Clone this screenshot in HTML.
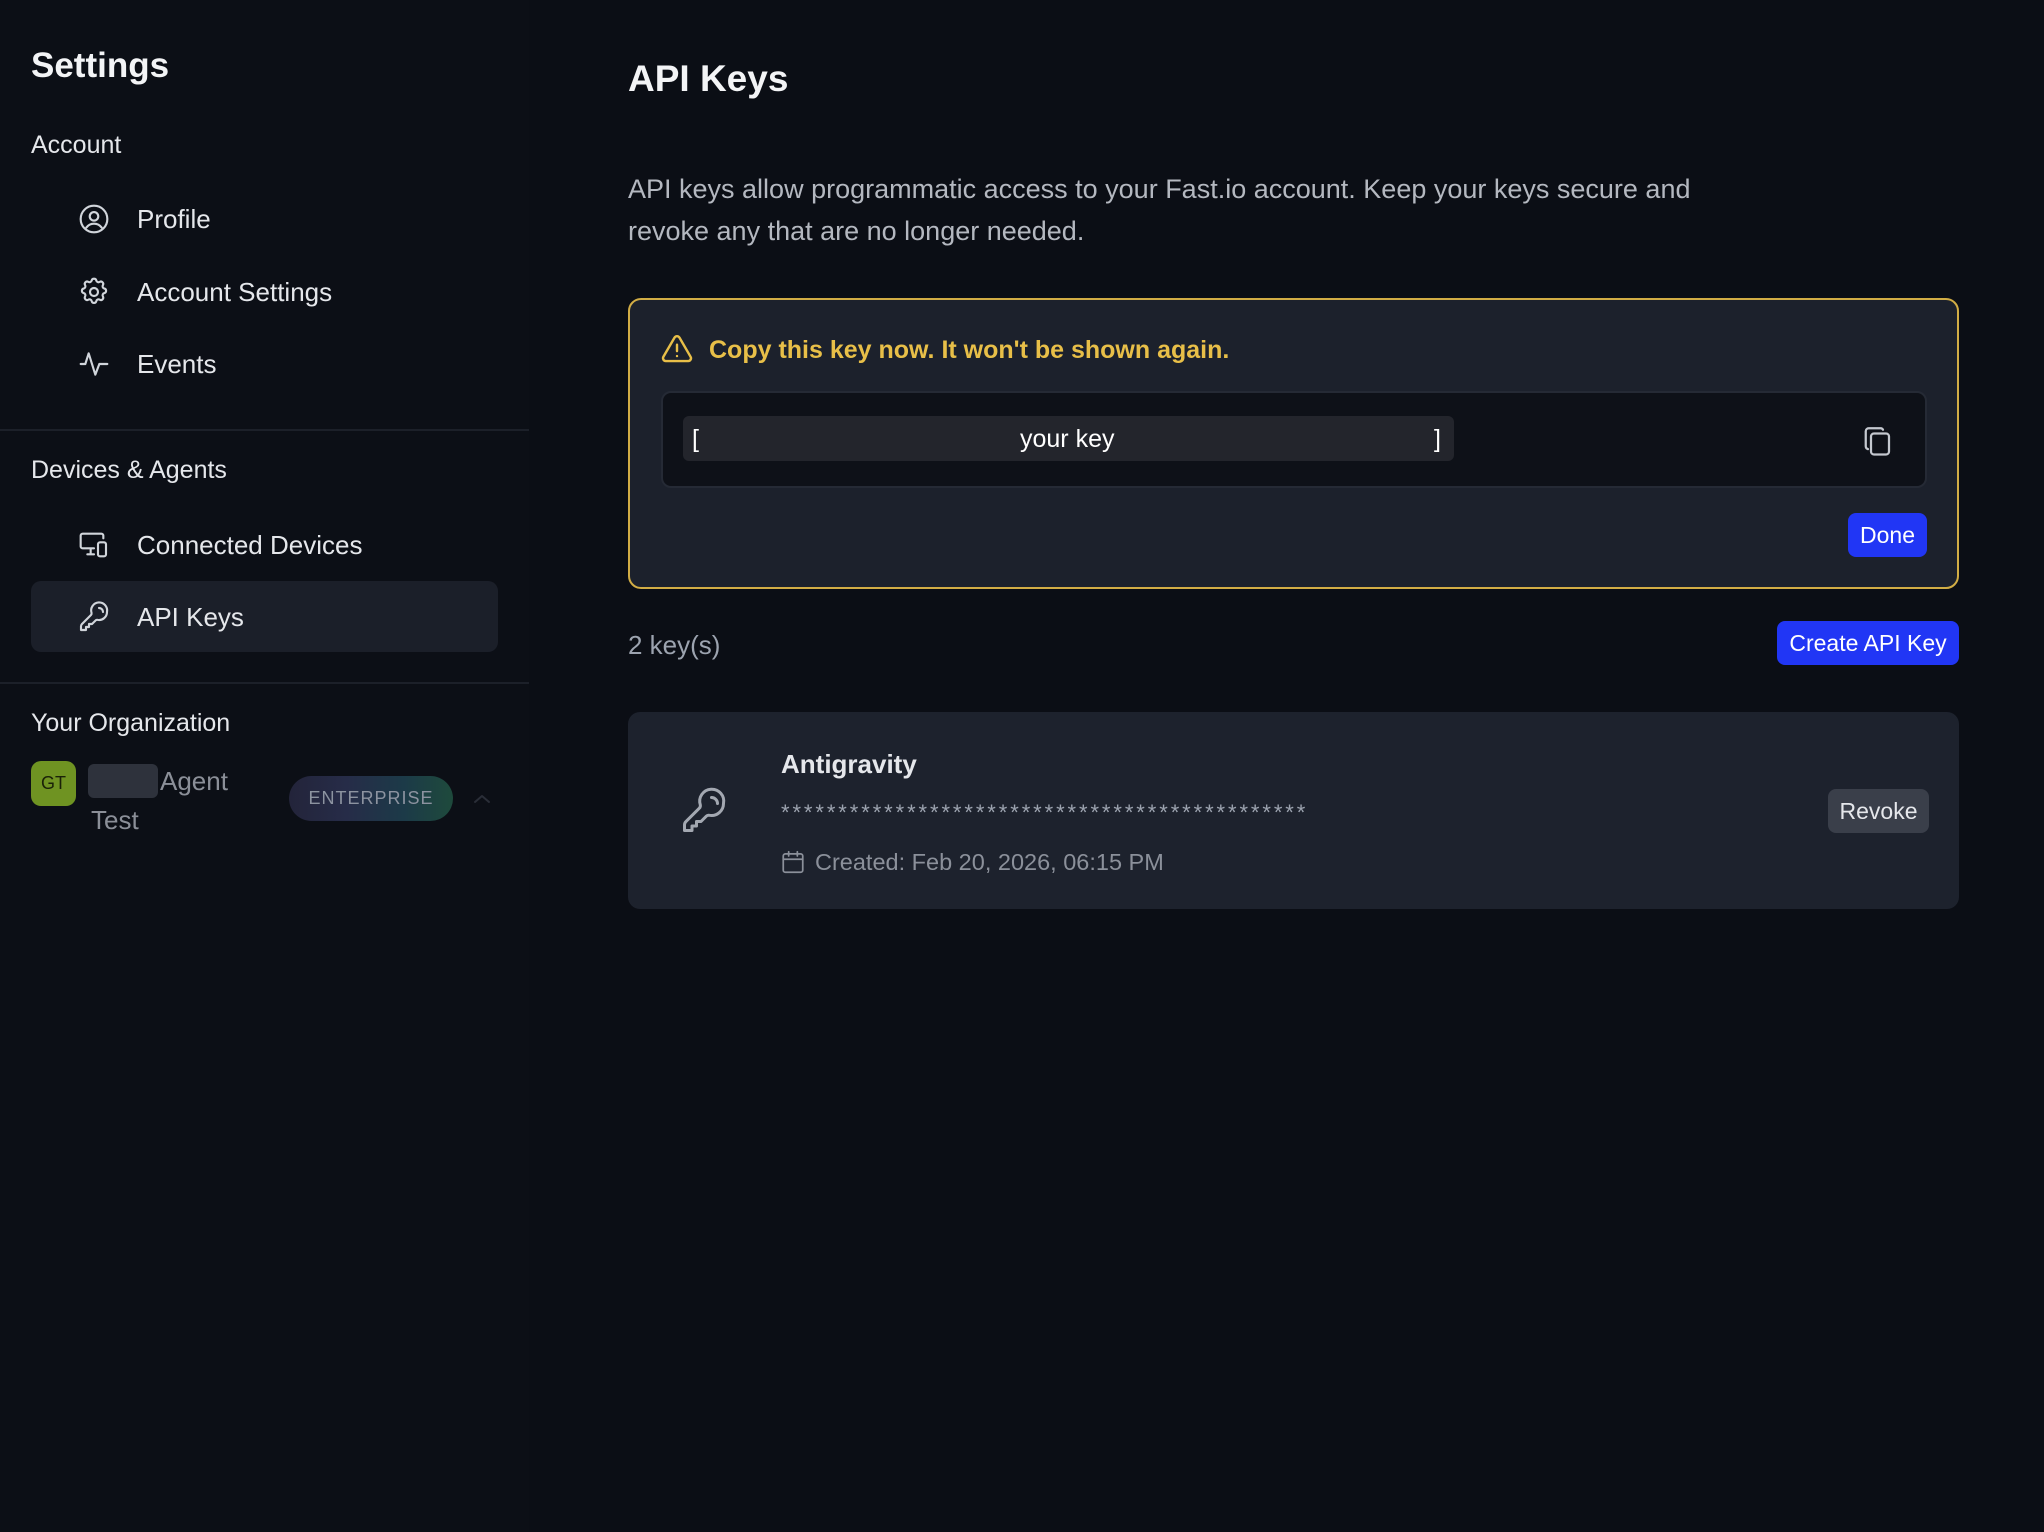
<!DOCTYPE html>
<html><head><meta charset="utf-8"><style>
*{box-sizing:border-box;margin:0;padding:0}
body{width:2044px;height:1532px;background:#0b0e15;font-family:"Liberation Sans",sans-serif;color:#e5e7eb;position:relative;overflow:hidden}
.a{position:absolute;white-space:nowrap}
.side{position:absolute;left:0;top:0;width:529px;height:1532px;background:#0c0f16}
.hr{position:absolute;left:0;width:529px;height:2px;background:#1c2029}
.sec{font-size:25px;color:#e5e7eb;left:31px}
.item{font-size:26px;color:#e5e7eb;left:137px}
svg.i{position:absolute;fill:none;stroke:#d1d5db;stroke-width:1.6;stroke-linecap:round;stroke-linejoin:round}
.btn{position:absolute;background:#2136f5;color:#fff;border-radius:8px;font-size:23px;display:flex;align-items:center;justify-content:center}
</style></head><body>
<div class="side"></div>
<div class="a" style="left:31px;top:46px;font-size:35px;font-weight:bold;color:#f3f4f6">Settings</div>
<div class="a sec" style="top:131px">Account</div>

<svg class="i" style="left:78px;top:203px" width="32" height="32" viewBox="0 0 24 24"><circle cx="12" cy="12" r="10"/><circle cx="12" cy="10" r="3.2"/><path d="M6.2 18.5c1.4-2 3.4-3 5.8-3s4.4 1 5.8 3"/></svg>
<div class="a item" style="top:204px">Profile</div>

<svg class="i" style="left:78px;top:276px" width="32" height="32" viewBox="0 0 24 24"><path d="M10.3 3.3c.4-1.7 3-1.7 3.4 0a1.7 1.7 0 0 0 2.6 1.1c1.5-.9 3.300.8 2.4 2.4a1.7 1.7 0 0 0 1.1 2.6c1.7.4 1.7 3 0 3.4a1.7 1.7 0 0 0-1.1 2.6c.9 1.5-.8 3.3-2.4 2.4a1.7 1.7 0 0 0-2.6 1.1c-.4 1.7-3 1.7-3.4 0a1.7 1.7 0 0 0-2.6-1.1c-1.5.9-3.3-.8-2.4-2.4a1.7 1.7 0 0 0-1.1-2.6c-1.7-.4-1.7-3 0-3.4a1.700 1.7 0 0 0 1.1-2.6c-.9-1.5.8-3.3 2.4-2.4 1 .6 2.3.1 2.6-1.1z"/><circle cx="12" cy="12" r="3"/></svg>
<div class="a item" style="top:277px">Account Settings</div>

<svg class="i" style="left:78px;top:348px" width="32" height="32" viewBox="0 0 24 24"><path d="M2 12h3.5l2.5-8 5 16 3-8h6"/></svg>
<div class="a item" style="top:349px">Events</div>

<div class="hr" style="top:429px"></div>
<div class="a sec" style="top:456px">Devices &amp; Agents</div>

<svg class="i" style="left:78px;top:529px" width="32" height="32" viewBox="0 0 24 24"><path d="M19 7V5a1.5 1.5 0 0 0-1.5-1.5h-14A1.5 1.5 0 0 0 2 5v8a1.5 1.5 0 0 0 1.5 1.5H12M7 19h5M9.5 14.5V19"/><rect x="15" y="10" width="6" height="10.5" rx="1.5"/></svg>
<div class="a item" style="top:530px">Connected Devices</div>

<div class="a" style="left:31px;top:581px;width:467px;height:71px;background:#1b1f29;border-radius:10px"></div>
<svg class="i" style="left:78px;top:601px" width="32" height="32" viewBox="0 0 24 24"><path d="M15.75 5.25a3 3 0 0 1 3 3m3 0a6 6 0 0 1-7.03 5.91c-.56-.1-1.16.03-1.57.43L10.5 17.25H8.25v2.25H6v2.25H2.25v-2.8c0-.6.24-1.17.66-1.6l6.82-6.81c.4-.41.52-1 .43-1.57A6 6 0 1 1 21.75 8.25z"/></svg>
<div class="a item" style="top:602px">API Keys</div>

<div class="hr" style="top:682px"></div>
<div class="a sec" style="top:709px">Your Organization</div>

<div class="a" style="left:31px;top:761px;width:45px;height:45px;background:#6f9322;border-radius:10px;color:#1a2108;font-size:18px;display:flex;align-items:center;justify-content:center">GT</div>
<div class="a" style="left:88px;top:764px;width:70px;height:34px;background:#2e323c;border-radius:6px"></div>
<div class="a" style="left:160px;top:766px;font-size:26px;color:#8b8f98">Agent</div>
<div class="a" style="left:91px;top:805px;font-size:26px;color:#8b8f98">Test</div>
<div class="a" style="left:289px;top:776px;width:164px;height:45px;border-radius:23px;background:linear-gradient(90deg,#23243a,#262c48 35%,#1c3a48 70%,#1e4a3c);color:#8c93a0;font-size:18px;letter-spacing:1px;display:flex;align-items:center;justify-content:center">ENTERPRISE</div>
<svg class="i" style="left:472px;top:789px;stroke:#2a2e38;stroke-width:2" width="20" height="20" viewBox="0 0 20 20"><path d="M3 13l7-6 7 6"/></svg>

<!-- main -->
<div class="a" style="left:628px;top:58px;font-size:37px;font-weight:bold;color:#f3f4f6">API Keys</div>
<div class="a" style="left:628px;top:168px;font-size:27px;line-height:42px;color:#b4b8c0;white-space:normal;width:1100px">API keys allow programmatic access to your Fast.io account. Keep your keys secure and revoke any that are no longer needed.</div>

<div class="a" style="left:628px;top:298px;width:1331px;height:291px;border:2px solid #d2ad45;border-radius:13px;background:#1c212c"></div>
<svg class="i" style="left:660px;top:332px;stroke:#e8bf48;stroke-width:1.7" width="34" height="34" viewBox="0 0 24 24"><path d="M10.3 3.9L2.4 17.5A2 2 0 0 0 4.1 20.5h15.8a2 2 0 0 0 1.7-3L13.7 3.9a2 2 0 0 0-3.4 0zM12 9v4.5M12 17h.01"/></svg>
<div class="a" style="left:709px;top:336px;font-size:25px;font-weight:bold;color:#e8bf48">Copy this key now. It won't be shown again.</div>

<div class="a" style="left:661px;top:391px;width:1266px;height:97px;background:#0e1118;border:2px solid #252a35;border-radius:10px"></div>
<div class="a" style="left:683px;top:416px;width:771px;height:45px;background:#23252c;border-radius:6px"></div>
<div class="a" style="left:692px;top:425px;font-size:25px;color:#fff">[</div>
<div class="a" style="left:1020px;top:425px;font-size:25px;color:#fff">your key</div>
<div class="a" style="left:1434px;top:425px;font-size:25px;color:#fff">]</div>
<svg class="i" style="left:1859px;top:423px;stroke:#c4c8cf;stroke-width:1.5" width="36" height="36" viewBox="0 0 24 24"><rect x="8" y="7" width="12" height="14" rx="2"/><path d="M16 4.5A1.8 1.8 0 0 0 14.5 3.5h-8A2 2 0 0 0 4.5 5.5v10a2 2 0 0 0 1.5 1.9"/></svg>
<div class="btn" style="left:1848px;top:513px;width:79px;height:44px">Done</div>

<div class="a" style="left:628px;top:630px;font-size:26px;color:#9ca3af">2 key(s)</div>
<div class="btn" style="left:1777px;top:621px;width:182px;height:44px">Create API Key</div>

<div class="a" style="left:628px;top:712px;width:1331px;height:197px;background:#1d222d;border-radius:12px"></div>
<svg class="i" style="left:680px;top:787px;stroke:#a3a8b1;stroke-width:1.5" width="48" height="48" viewBox="0 0 24 24"><path d="M15.75 5.25a3 3 0 0 1 3 3m3 0a6 6 0 0 1-7.03 5.91c-.56-.1-1.16.03-1.57.43L10.5 17.25H8.25v2.25H6v2.25H2.25v-2.8c0-.6.24-1.17.66-1.6l6.82-6.81c.4-.41.52-1 .43-1.57A6 6 0 1 1 21.75 8.25z"/></svg>
<div class="a" style="left:781px;top:749px;font-size:26px;font-weight:bold;color:#e5e7eb">Antigravity</div>
<div class="a" style="left:781px;top:800px;font-size:22px;color:#9ca3af;letter-spacing:2.9px">**********************************************</div>
<svg class="i" style="left:780px;top:849px;stroke:#8b909a;stroke-width:1.6" width="26" height="26" viewBox="0 0 24 24"><rect x="3" y="4.5" width="18" height="17" rx="2"/><path d="M3 9.5h18M8 2.5v4M16 2.5v4"/></svg>
<div class="a" style="left:815px;top:849px;font-size:23.5px;color:#8b909a">Created: Feb 20, 2026, 06:15 PM</div>
<div class="a" style="left:1828px;top:789px;width:101px;height:44px;background:#3a3f4a;border-radius:8px;color:#e5e7eb;font-size:23px;display:flex;align-items:center;justify-content:center">Revoke</div>
</body></html>
